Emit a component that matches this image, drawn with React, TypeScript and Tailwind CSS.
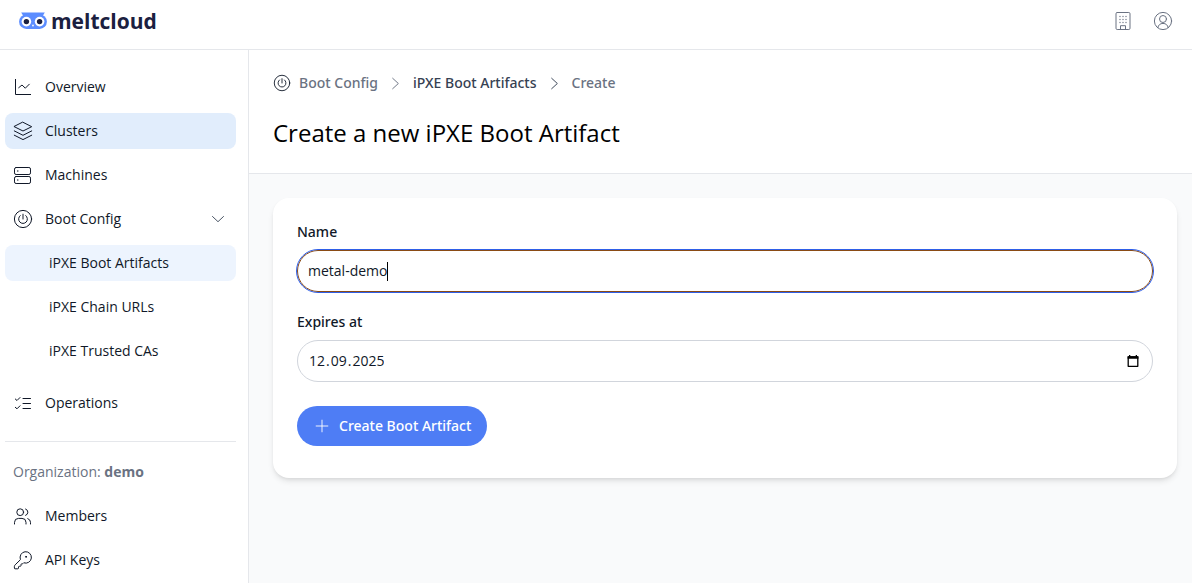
import React from 'react';

interface IconProps {
  className?: string;
}

interface SvgIconProps extends IconProps {
  children: React.ReactNode;
}

const SvgIcon: React.FC<SvgIconProps> = ({ className = 'size-5', children }) => (
  <svg
    viewBox="0 0 20 20"
    className={`${className} shrink-0`}
    fill="none"
    stroke="currentColor"
    strokeWidth="1"
    strokeLinecap="round"
    strokeLinejoin="round"
    aria-hidden="true"
  >
    {children}
  </svg>
);

const ChartIcon = (props: IconProps) => (
  <SvgIcon {...props}>
    <path d="M2.5 2v15.5H18" strokeLinecap="butt" strokeLinejoin="miter" />
    <path d="M5.7 10.7 9 8l3.3 3.2 4-4" />
  </SvgIcon>
);

const LayersIcon = (props: IconProps) => (
  <SvgIcon {...props}>
    <path d="M10 1.3 18.7 5.7 10 10 1.3 5.7z" />
    <path d="m1.3 9.9 8.7 4.4 8.7-4.4" />
    <path d="m1.3 14.2 8.7 4.4 8.7-4.4" />
  </SvgIcon>
);

const ServerIcon = (props: IconProps) => (
  <SvgIcon {...props}>
    <rect x="1.5" y="2.5" width="16" height="7" rx="1.6" />
    <rect x="1.5" y="11.5" width="16" height="7" rx="1.6" />
    <path d="M4.8 6h.01M4.8 15h.01" strokeWidth="1.4" />
  </SvgIcon>
);

const PowerIcon = (props: IconProps) => (
  <SvgIcon {...props}>
    <circle cx="10" cy="10" r="8.6" />
    <path d="M10 5.2v4.8" />
    <path d="M7.2 6.6a4.4 4.4 0 1 0 5.6 0" />
  </SvgIcon>
);

const TasksIcon = (props: IconProps) => (
  <SvgIcon {...props}>
    <path d="M2.3 6 4 7.5l3-3M2.3 14.3 4 15.8l3-3" />
    <path d="M10 5.5h7.5M10 10.5h7.5M10 15.5h7.5" />
  </SvgIcon>
);

const UsersIcon = (props: IconProps) => (
  <SvgIcon {...props}>
    <circle cx="7.2" cy="6.2" r="3.4" />
    <path d="M1.5 18v-1.6a4 4 0 0 1 4-4H9a4 4 0 0 1 4 4V18" />
    <path d="M12.6 3a3.4 3.4 0 0 1 0 6.4M14.8 12.6a4 4 0 0 1 2.7 3.8V18" />
  </SvgIcon>
);

const KeyIcon = (props: IconProps) => (
  <SvgIcon {...props}>
    <path d="M1.9 15.1a1.7 1.7 0 0 0-.5 1.2V18a.7.7 0 0 0 .7.8h2.6a.8.8 0 0 0 .8-.8v-.9a.8.8 0 0 1 .8-.8h.9a.8.8 0 0 0 .8-.8v-.9a.8.8 0 0 1 .8-.8h.3a1.7 1.7 0 0 0 1.2-.5l.5-.5a5.7 5.7 0 1 0-3.5-3.5z" />
    <circle cx="13" cy="6.8" r=".5" fill="currentColor" />
  </SvgIcon>
);

const BuildingIcon = (props: IconProps) => (
  <SvgIcon {...props}>
    <rect x="3" y="1.5" width="14" height="17" rx="1.2" />
    <path d="M7.5 18.5v-3.8h5v3.8" />
    <path d="M7 5.5h.01M10 5.5h.01M13 5.5h.01M7 8.5h.01M10 8.5h.01M13 8.5h.01M7 11.5h.01M10 11.5h.01M13 11.5h.01" strokeWidth="1.3" />
  </SvgIcon>
);

const UserIcon = (props: IconProps) => (
  <SvgIcon {...props}>
    <circle cx="10" cy="10" r="8.6" />
    <circle cx="10" cy="8" r="3.5" />
    <path d="M4.8 16.7a5.3 5.3 0 0 1 10.4 0" />
  </SvgIcon>
);

const ChevronDownIcon = (props: IconProps) => (
  <SvgIcon {...props}>
    <path d="m4.5 7.5 5.5 5.2 5.5-5.2" />
  </SvgIcon>
);

const ChevronRightIcon = (props: IconProps) => (
  <SvgIcon {...props}>
    <path d="m7 4.5 6 5.5-6 5.5" />
  </SvgIcon>
);

const PlusIcon = (props: IconProps) => (
  <SvgIcon {...props}>
    <path d="M10 3.5v13M3.5 10h13" />
  </SvgIcon>
);

const CalendarIcon = () => (
  <svg viewBox="0 0 14 14" className="size-3.5" fill="none" aria-hidden="true">
    <path d="M2.2 3h9.6v9.3H2.2z" stroke="black" strokeWidth="1.3" strokeLinejoin="round" />
    <path d="M1.6 2.2h10.8v2.6H1.6zM3 1h1.3v1.6H3zM9.7 1H11v1.6H9.7z" fill="black" />
  </svg>
);

const OwlLogo = () => (
  <svg viewBox="0 0 28 17" className="h-[17px] w-7" aria-hidden="true">
    <g fill="#5c8dff">
      <path d="M2.2.4h23.6L24 3.6 20.6 17H7.4L4 3.6z" />
      <circle cx="7.4" cy="9.7" r="7.3" />
      <circle cx="20.6" cy="9.7" r="7.3" />
    </g>
    <circle cx="7.4" cy="9.6" r="4.8" fill="white" />
    <circle cx="20.6" cy="9.6" r="4.8" fill="white" />
    <circle cx="7.4" cy="9.6" r="2.7" fill="#1b2040" />
    <circle cx="20.6" cy="9.6" r="2.7" fill="#1b2040" />
    <path d="M12.8 12.8h2.4L14 15z" fill="white" />
  </svg>
);

interface NavItemProps {
  label: string;
  icon: React.FC<IconProps>;
  active?: boolean;
  expandable?: boolean;
}

const NavItem: React.FC<NavItemProps> = ({ label, icon: Icon, active, expandable }) => (
  <li>
    <a
      href="#"
      className={`flex h-9 items-center gap-3 rounded-lg px-2 ${active ? 'bg-[#e1edfc]' : 'hover:bg-gray-100'}`}
    >
      <Icon />
      <span className="flex-1">{label}</span>
      {expandable && <ChevronDownIcon className="size-5 text-gray-600" />}
    </a>
  </li>
);

const bootConfigItems = [
  { label: 'iPXE Boot Artifacts', active: true },
  { label: 'iPXE Chain URLs', active: false },
  { label: 'iPXE Trusted CAs', active: false },
];

const Sidebar = () => (
  <aside className="w-[249px] shrink-0 border-r border-gray-200 pt-[19px] pr-3 pl-[5px] text-gray-900">
    <nav>
      <ul className="space-y-2">
        <NavItem label="Overview" icon={ChartIcon} />
        <NavItem label="Clusters" icon={LayersIcon} active />
        <NavItem label="Machines" icon={ServerIcon} />
        <NavItem label="Boot Config" icon={PowerIcon} expandable />
        <li>
          <ul className="space-y-2 pb-2">
            {bootConfigItems.map((item) => (
              <li key={item.label}>
                <a
                  href="#"
                  className={`flex h-9 items-center rounded-lg pl-11 ${item.active ? 'bg-[#edf4fe]' : 'hover:bg-gray-100'}`}
                >
                  {item.label}
                </a>
              </li>
            ))}
          </ul>
        </li>
        <NavItem label="Operations" icon={TasksIcon} />
      </ul>

      {/* Organization section */}
      <div className="mt-5 border-t border-gray-200 pt-5">
        <p className="px-2 text-gray-500">
          Organization: <strong className="font-bold">demo</strong>
        </p>
        <ul className="mt-4 space-y-2">
          <NavItem label="Members" icon={UsersIcon} />
          <NavItem label="API Keys" icon={KeyIcon} />
        </ul>
      </div>
    </nav>
  </aside>
);

const dateFields = [
  { key: 'day', label: 'Day', maxLength: 2 },
  { key: 'month', label: 'Month', maxLength: 2 },
  { key: 'year', label: 'Year', maxLength: 4 },
] as const;

const DateInput: React.FC<{ id: string }> = ({ id }) => {
  const [date, setDate] = React.useState({ day: '12', month: '09', year: '2025' });

  return (
    <div className="mt-2 flex h-[42px] items-center rounded-full border border-gray-300 pr-3 pl-2.5">
      <div className="flex flex-1 items-center">
        {dateFields.map((field, i) => (
          <React.Fragment key={field.key}>
            {i > 0 && <span>.</span>}
            <input
              id={i === 0 ? id : undefined}
              type="text"
              inputMode="numeric"
              aria-label={field.label}
              maxLength={field.maxLength}
              className="field-sizing-content px-px outline-none"
              value={date[field.key]}
              onChange={(e) => setDate({ ...date, [field.key]: e.target.value })}
            />
          </React.Fragment>
        ))}
      </div>
      <button type="button" aria-label="Open calendar"><CalendarIcon /></button>
    </div>
  );
};

const App = () => {
  const [name, setName] = React.useState('metal-demo');

  return (
    <div className="flex h-screen flex-col overflow-hidden bg-white font-['Open_Sans','Noto_Sans',sans-serif] text-sm">
      <header className="flex h-[50px] shrink-0 items-center justify-between border-b border-gray-200 px-[19px] pb-2">
        <a href="#" className="flex items-center gap-1 text-[21px] leading-7 font-bold text-[#1b2040]">
          <OwlLogo />
          meltcloud
        </a>
        <div className="flex items-center gap-5 text-gray-500">
          <button type="button" aria-label="Organizations"><BuildingIcon /></button>
          <button type="button" aria-label="Account"><UserIcon /></button>
        </div>
      </header>

      <div className="flex min-h-0 flex-1">
        <Sidebar />

        <main className="min-w-0 flex-1 bg-gray-50">
          <div className="border-b border-gray-200 bg-white px-6 pt-[23px] pb-6">
            <nav className="flex items-center font-['Noto_Sans',sans-serif] font-medium text-gray-500">
              <PowerIcon className="mr-2 size-[18px] text-gray-900" />
              <a href="#">Boot Config</a>
              <ChevronRightIcon className="mx-2 size-[19px]" />
              <a href="#" className="text-gray-700">iPXE Boot Artifacts</a>
              <ChevronRightIcon className="mx-2 size-[19px] text-gray-700" />
              <span>Create</span>
            </nav>
            <h1 className="mt-6 text-2xl text-black">Create a new iPXE Boot Artifact</h1>
          </div>

          <div className="pt-6 pr-[15px] pl-6">
            <form
              className="rounded-2xl bg-white px-6 pt-6 pb-8 text-gray-900 shadow-md"
              onSubmit={(e) => e.preventDefault()}
            >
              <label htmlFor="name" className="block font-['Noto_Sans',sans-serif] font-medium">Name</label>
              <div className="relative mt-2">
                <input
                  id="name"
                  type="text"
                  autoFocus
                  className="block h-[42px] w-full rounded-full border border-[#8a4b14] px-2.5 pb-px caret-transparent outline-1 outline-[#2f5fe8]"
                  value={name}
                  onChange={(e) => setName(e.target.value)}
                />
                {/* Steady caret after the last character */}
                <div className="pointer-events-none absolute inset-y-0 left-[11px] flex items-center" aria-hidden="true">
                  <span className="invisible whitespace-pre">{name}</span>
                  <span className="h-[19px] w-px bg-black" />
                </div>
              </div>

              <label htmlFor="expires" className="mt-5 block font-['Noto_Sans',sans-serif] font-medium">Expires at</label>
              <DateInput id="expires" />

              <button
                type="submit"
                className="mt-6 flex h-10 items-center gap-2 rounded-full bg-[#4e7df5] px-4 font-['Noto_Sans',sans-serif] font-medium text-white"
              >
                <PlusIcon className="size-[18px]" />
                Create Boot Artifact
              </button>
            </form>
          </div>
        </main>
      </div>
    </div>
  );
};

export default App;
